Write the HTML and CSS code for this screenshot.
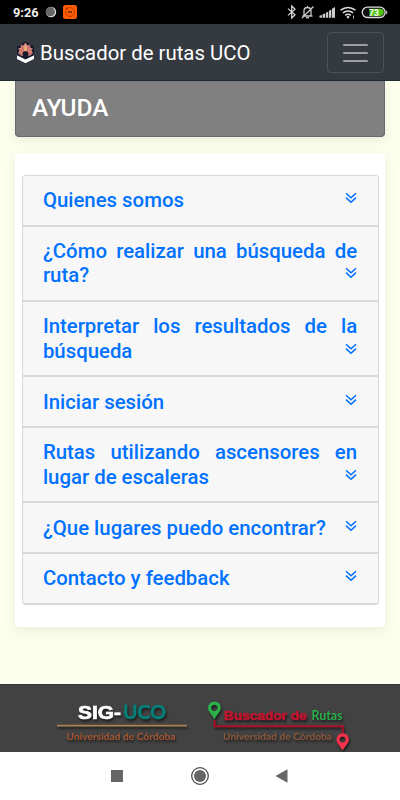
FILE: index.html
```html
<!DOCTYPE html>
<html lang="es">
<head>
<meta charset="utf-8">
<meta name="viewport" content="width=device-width">
<title>Buscador de rutas UCO</title>
<link rel="stylesheet" href="styles.css">
</head>
<body>
<svg class="defs" width="0" height="0">
  <symbol id="chev" viewBox="0 0 12 12"><path d="M1 1.200 6 5.800 11 1.200M1 5.600 6 10.200 11 5.600" fill="none" stroke="#006fff" stroke-width="1.500"/></symbol>
</svg>
<div class="status">
  <span class="time">9:26</span>
  <svg class="moon" width="12" height="12" viewBox="0 0 12 12"><circle cx="6" cy="6" r="5.200" fill="#ddd"/><circle cx="5.300" cy="5.700" r="4.600" fill="#666"/></svg>
  <svg class="app" width="14" height="14" viewBox="0 0 14 14"><rect width="14" height="14" rx="2.500" fill="#ff5b00"/><circle cx="7" cy="7" r="4.500" fill="none" stroke="#a83700" stroke-width=".8"/><path d="M5 7h4" stroke="#702400" stroke-width="1.600"/><circle cx="3.600" cy="3.400" r=".8" fill="#802800"/></svg>
  <svg class="sys" width="102" height="16" viewBox="0 0 102 16">
    <path d="M2 4.600 9 10.800 5.700 14V2L9 5.200 2 11.400" fill="none" stroke="#ddd" stroke-width="1.200"/>
    <g fill="none" stroke="#c8c8c8" stroke-width="1.300"><path d="M16.500 12h10M18 12V7C18 4.500 19.300 3.500 21.500 3.500S25 4.500 25 7V12M21.500 2v1.500M16 14 27.500 2.500"/><path d="M20 13.700h3"/></g>
    <g fill="#ccc"><path d="M33.500 13.700v-2l2.400-.8v2.800zM36.600 13.700v-3.400l2.400-.9v4.300zM39.800 13.700V8.800l2.400-1v5.900zM43 13.700V6.800l2.300-1.300v8.200zM46 13.700V4.700l3-1.700v10.700z"/></g>
    <g fill="none" stroke="#ddd" stroke-width="1.500"><path d="M54.500 6.200q7.500-5.600 15 0M56.900 8.900q5.100-4 10.200 0M59.200 11.400q2.800-2.200 5.600 0"/></g><path d="M60.300 12.700q1.700-1.200 3.400 0l-1.700 2z" fill="#ddd"/><path d="M67.500 11.500v3.300" stroke="#aaa"/>
    <rect x="76.200" y="3.200" width="23" height="10.300" rx="5.150" fill="#111" stroke="#ddd" stroke-width="1.300"/><path d="M83.500 4.800h10.700a3.550 3.550 0 0 1 0 7.100H83.500z" fill="#50c414"/><path d="M100.700 6.700v3.500" stroke="#ccc"/>
    <text x="83" y="11.500" class="pct">73</text>
  </svg>
</div>
<header class="navbar">
  <svg class="crest" width="19" height="24" viewBox="0 0 19 24"><path d="M9.500 .5 18 5.500V18L9.500 23 1 18V5.500z" fill="#17192e"/><path d="M2.200 12.500 3.500 9 2 7.500 5 6.500 4.500 3.500 7.500 4.500 9.500 1.500 11.500 4.500 14.500 3.500 14 6.500 17 7.500 15.500 9 16.800 12.500 13 15H6z" fill="#d98f86"/><path d="M8 11 5.500 4M11 11l2.500-7M7 12 3 7.500M12 12l4-4.500M6 13.500 2.500 11M13 13.500l3.500-2.500" stroke="#b8443c" stroke-width=".7"/><path d="M8 9.500 9.500 3 11 9.500z" fill="#f3b36c"/><circle cx="9.500" cy="13.300" r="3" fill="#17192e"/><path d="M1 14.300 9.500 18.600 18 14.300V17.900L9.500 22.200 1 17.900z" fill="#fff"/></svg>
  <span class="brand">Buscador de rutas UCO</span>
  <button class="toggler" aria-label="Menu"><i></i><i></i><i></i></button>
</header>
<main>
  <h1 class="title">AYUDA</h1>
  <section class="panel">
    <div class="list">
      <div class="item">Quienes somos<svg><use href="#chev"/></svg></div>
      <div class="item">¿Cómo realizar una búsqueda de ruta?<svg><use href="#chev"/></svg></div>
      <div class="item">Interpretar los resultados de la búsqueda<svg><use href="#chev"/></svg></div>
      <div class="item">Iniciar sesión<svg><use href="#chev"/></svg></div>
      <div class="item">Rutas utilizando ascensores en lugar de escaleras<svg><use href="#chev"/></svg></div>
      <div class="item">¿Que lugares puedo encontrar?<svg><use href="#chev"/></svg></div>
      <div class="item">Contacto y feedback<svg><use href="#chev"/></svg></div>
    </div>
  </section>
</main>
<footer>
  <svg width="400" height="68" viewBox="0 0 400 68">
    <g class="cast">
      <text x="78" y="34" class="sig" textLength="43" lengthAdjust="spacingAndGlyphs">SIG-</text>
      <text x="123" y="34" class="uco" textLength="43" lengthAdjust="spacingAndGlyphs">UCO</text>
      <path d="M57 40.700H187" stroke="#a88352" stroke-width="1.700"/>
      <text x="66.500" y="55" class="uni a" textLength="109" lengthAdjust="spacingAndGlyphs">Universidad de Córdoba</text>
      <path d="M214.500 35V41.200H342.700V48" fill="none" stroke="#ad1028" stroke-width="2"/>
      <path d="M214.400 34.500C212 29.500 208 27 208 22.800a6.400 6.400 0 0 1 12.800 0C220.800 27 216.800 29.500 214.400 34.500zM214.400 19.700a3.200 3.200 0 1 0 .01 0z" fill="#2bb04a" fill-rule="evenodd"/>
      <path d="M342.600 65.500C340.300 61 336.500 58.500 336.500 54.500a6.200 6.200 0 0 1 12.400 0C348.900 58.500 345 61 342.600 65.500zM342.600 51.600a3 3 0 1 0 .01 0z" fill="#f5324c" fill-rule="evenodd"/>
      <text x="224" y="34.500" class="bus" textLength="83" lengthAdjust="spacingAndGlyphs">Buscador de</text>
      <text x="311.500" y="34.500" class="rut" textLength="31" lengthAdjust="spacingAndGlyphs">Rutas</text>
      <text x="223" y="55" class="uni b" textLength="109" lengthAdjust="spacingAndGlyphs">Universidad de Córdoba</text>
    </g>
  </svg>
</footer>
<nav class="keys">
  <svg width="400" height="48" viewBox="0 0 400 48"><path d="M111 18h12v12H111z" fill="#666"/><circle cx="200" cy="24" r="8.300" fill="none" stroke="#444" stroke-width="1.200"/><circle cx="200" cy="24" r="6" fill="#666"/><path d="M275.500 24 287.500 17.300V30.700z" fill="#666"/></svg>
</nav>
</body>
</html>
```
FILE: styles.css
```css
* { box-sizing: border-box; }
body {
  margin: 0;
  width: 400px;
  height: 800px;
  overflow: hidden;
  display: flex;
  flex-direction: column;
  background: #fcffec;
  font-family: Roboto, "Liberation Sans", sans-serif;
}
svg { display: block; flex: none; }
.defs { position: absolute; }
.status {
  height: 24px;
  flex: none;
  display: flex;
  align-items: center;
  padding: 0 12px 0 13px;
  background: #000;
  color: #eee;
}
.time { font-size: 12.800px; font-weight: 700; width: 32px; }
.app { margin-left: 6px; }
.sys { margin-left: auto; }
.pct { font: 700 8.500px Roboto, sans-serif; fill: #fff; }
.navbar {
  height: 57px;
  flex: none;
  display: flex;
  align-items: center;
  padding: 1px 16px 0;
  background: #343a40;
  border-bottom: 1px solid #202a35;
}
.brand { color: #fff; font-size: 20.360px; margin-left: 5px; white-space: nowrap; }
.toggler {
  margin-left: auto;
  width: 57px;
  height: 41px;
  padding: 0;
  border: 1px solid #4c5155;
  border-radius: 4px;
  background: none;
  display: flex;
  flex-direction: column;
  justify-content: center;
  align-items: center;
  gap: 6px;
}
.toggler i { width: 25px; height: 2px; background: #999da0; border-radius: 1px; }
main { height: 603px; flex: none; padding: 0 15px; }
.title {
  margin: 0;
  height: 56px;
  padding: 11px 16px;
  background: #808080;
  border: 1px solid #6b6970;
  border-top-color: #77777c;
  border-radius: 0 0 4px 4px;
  color: #fff;
  font-size: 24.400px;
  line-height: 30px;
  font-weight: 500;
  box-shadow: 0 4px 12px rgba(0, 0, 0, .075);
}
.panel {
  margin-top: 16px;
  height: 474px;
  padding: 22px 6.500px;
  background: #fff;
  border-radius: 4px;
  box-shadow: 0 4px 14px rgba(0, 0, 0, .075);
}
.list { border: 1px solid #d8d8d8; border-bottom-width: 2px; border-radius: 4px; overflow: hidden; }
.item {
  padding: 12.200px 20.400px;
  background: #f7f7f7;
  color: #0072ff;
  font-size: 20.360px;
  line-height: 24.430px;
  font-weight: 500;
  text-align: justify;
}
.item + .item { border-top: 2px solid #d9d9d9; }
.item svg { float: right; width: 12px; height: 12px; margin-top: 4px; }
footer { height: 68px; flex: none; background: #424242; border-top: 1px solid #343434; }
.cast { filter: drop-shadow(1px 2px 1px rgba(0, 0, 0, .6)); }
.sig, .bus { font-family: "Liberation Sans", Arial, sans-serif; font-weight: 700; stroke-width: .7px; }
.sig { font-size: 19px; fill: #fff; stroke: #fff; }
.uco { font: 700 18px Lato, sans-serif; fill: #087f76; stroke: #087f76; stroke-width: .5px; }
.bus { font-size: 12.500px; fill: #bd1730; stroke: #bd1730; }
.rut { font: 700 13px Lato, sans-serif; fill: #2bb04a; }
.uni { font: 700 9.500px Lato, sans-serif; }
.a { fill: #a8562f; }
.b { fill: #8c5839; }
.keys { height: 48px; flex: none; background: #fff; }
```
